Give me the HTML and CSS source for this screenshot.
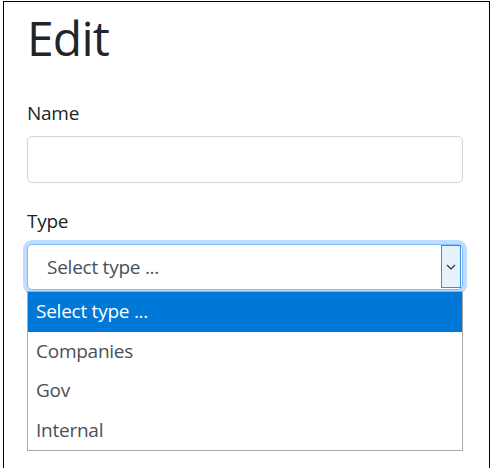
FILE: index.html
```html
<!DOCTYPE html>
<html lang="en">
<head>
<meta charset="utf-8">
<title>Edit</title>
<link rel="stylesheet" href="styles.css">
</head>
<body>
<div class="frame">
  <h1 class="title">Edit</h1>
  <div class="field">
    <label class="label">Name</label>
    <div class="input"></div>
  </div>
  <div class="field field-select">
    <label class="label">Type</label>
    <div class="select">
      <span class="select-value">Select type ...</span>
      <span class="select-arrow">
        <svg width="10" height="6" viewBox="0 0 10 6"><path d="M1 1 L5 5 L9 1" fill="none" stroke="#333" stroke-width="1.2"/></svg>
      </span>
    </div>
    <ul class="options">
      <li class="option option-active">Select type ...</li>
      <li class="option">Companies</li>
      <li class="option">Gov</li>
      <li class="option">Internal</li>
    </ul>
  </div>
</div>
</body>
</html>
```
FILE: styles.css
```css
html, body {
  margin: 0;
  padding: 0;
  background: #fff;
}
body {
  font-family: "Segoe UI", "Open Sans", "Noto Sans", sans-serif;
  color: #212529;
}
.frame {
  box-sizing: border-box;
  margin: 1px 4px 0 3px;
  min-height: 467px;
  border: 1px solid #000;
  border-bottom: 0;
  padding: 0 26px 0 23px;
}
.title {
  margin: 6px 0 30px;
  font-size: 48px;
  letter-spacing: -0.8px;
  line-height: 60px;
  font-weight: 400;
  color: #212529;
}
.field {
  margin-bottom: 23px;
}
.field-select {
  position: relative;
}
.label {
  display: block;
  font-size: 19px;
  letter-spacing: -0.25px;
  line-height: 30px;
  margin-bottom: 8px;
}
.input {
  box-sizing: border-box;
  height: 47px;
  border: 1px solid #ced4da;
  border-radius: 5px;
  background: #fff;
}
.select {
  box-sizing: border-box;
  height: 46px;
  border: 1px solid #80bdff;
  border-radius: 5px;
  box-shadow: 0 0 0 4px rgba(0, 123, 255, 0.25);
  display: flex;
  align-items: stretch;
  background: #fff;
}
.select-value {
  flex: 1;
  display: flex;
  align-items: center;
  padding-left: 19px;
  font-size: 19px;
  letter-spacing: -0.25px;
  color: #495057;
}
.select-arrow {
  box-sizing: border-box;
  width: 20px;
  margin: 0 1px 1px 0;
  border: 1px solid #3d8ee0;
  background: #e5f1fb;
  display: flex;
  align-items: center;
  justify-content: center;
}
.options {
  position: absolute;
  left: 0;
  right: 0;
  top: 85px;
  margin: 0;
  padding: 0;
  list-style: none;
  border: 1px solid #a9a9a9;
  background: #fff;
  z-index: 2;
}
.option {
  height: 39.5px;
  line-height: 39.5px;
  padding-left: 8px;
  font-size: 19px;
  letter-spacing: -0.25px;
  color: #495057;
}
.option-active {
  background: #0078d7;
  color: #fff;
}
```
